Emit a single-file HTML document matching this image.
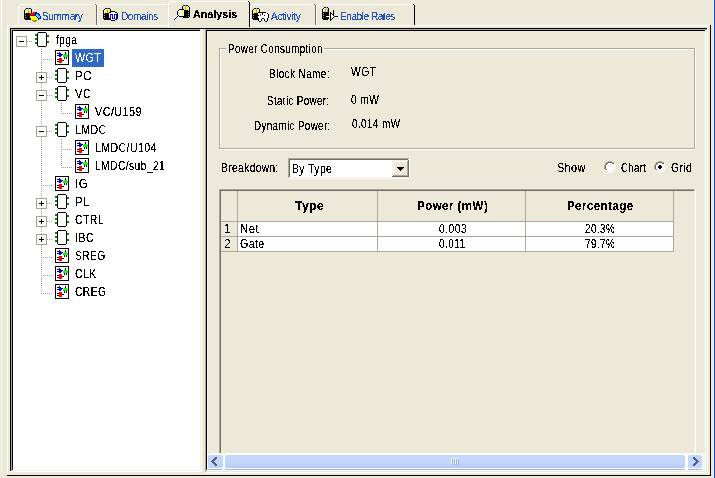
<!DOCTYPE html>
<html><head><meta charset="utf-8"><style>
html,body{margin:0;padding:0;}
body{width:715px;height:478px;background:#ECE9D8;position:relative;overflow:hidden;font-family:'Liberation Sans', sans-serif;}
body>div{position:absolute;}
.t{position:absolute;line-height:13px;white-space:nowrap;transform-origin:0 0;}
</style></head><body>
<svg width="0" height="0" style="position:absolute"><filter id="th" x="0" y="0" width="1" height="1" color-interpolation-filters="sRGB"><feComponentTransfer><feFuncA type="discrete" tableValues="0 0 0 0 1 1 1 1 1 1"/></feComponentTransfer></filter></svg>
<svg width="0" height="0" style="position:absolute"><filter id="th2" x="0" y="0" width="1" height="1" color-interpolation-filters="sRGB"><feComponentTransfer><feFuncA type="discrete" tableValues="0 0 0 0 0 1 1 1 1 1"/></feComponentTransfer></filter></svg>
<div style="left:1px;top:0px;width:1px;height:472px;background:#FFFFFF;"></div>
<div style="left:714px;top:0px;width:1px;height:478px;background:#0A46DC;"></div>
<div style="left:713px;top:0px;width:1px;height:478px;background:#F7F3E3;"></div>
<div style="left:20px;top:4px;width:75px;height:1px;background:#FFFFFF;"></div>
<div style="left:19px;top:5px;width:1px;height:1px;background:#FFFFFF;"></div>
<div style="left:18px;top:6px;width:1px;height:20px;background:#FFFFFF;"></div>
<div style="left:96px;top:5px;width:1px;height:20px;background:#716F64;"></div>
<div style="left:95px;top:4px;width:1px;height:1px;background:#716F64;"></div>
<div style="left:99px;top:4px;width:68px;height:1px;background:#FFFFFF;"></div>
<div style="left:98px;top:5px;width:1px;height:1px;background:#FFFFFF;"></div>
<div style="left:97px;top:6px;width:1px;height:20px;background:#FFFFFF;"></div>
<div style="left:252px;top:4px;width:62px;height:1px;background:#FFFFFF;"></div>
<div style="left:251px;top:5px;width:1px;height:1px;background:#FFFFFF;"></div>
<div style="left:250px;top:6px;width:1px;height:20px;background:#FFFFFF;"></div>
<div style="left:315px;top:5px;width:1px;height:20px;background:#716F64;"></div>
<div style="left:314px;top:4px;width:1px;height:1px;background:#716F64;"></div>
<div style="left:318px;top:4px;width:95px;height:1px;background:#FFFFFF;"></div>
<div style="left:317px;top:5px;width:1px;height:1px;background:#FFFFFF;"></div>
<div style="left:316px;top:6px;width:1px;height:20px;background:#FFFFFF;"></div>
<div style="left:414px;top:5px;width:1px;height:20px;background:#000000;"></div>
<div style="left:413px;top:4px;width:1px;height:1px;background:#000000;"></div>
<div style="left:7px;top:25px;width:703px;height:1px;background:#FFFFFF;"></div>
<div style="left:168px;top:1px;width:82px;height:26px;background:#ECE9D8;"></div>
<div style="left:170px;top:1px;width:78px;height:1px;background:#FFFFFF;"></div>
<div style="left:169px;top:2px;width:1px;height:1px;background:#FFFFFF;"></div>
<div style="left:168px;top:3px;width:1px;height:24px;background:#FFFFFF;"></div>
<div style="left:249px;top:2px;width:1px;height:25px;background:#000000;"></div>
<div style="left:248px;top:1px;width:1px;height:1px;background:#000000;"></div>
<div style="left:7px;top:25px;width:1px;height:450px;background:#FFFFFF;"></div>
<div style="left:710px;top:25px;width:1px;height:451px;background:#000000;"></div>
<div style="left:7px;top:475px;width:704px;height:1px;background:#000000;"></div>
<div style="left:10px;top:28px;width:697px;height:1px;background:#000000;"></div>
<div style="left:11px;top:29px;width:189px;height:1px;background:#ACA899;"></div>
<div style="left:200px;top:29px;width:5px;height:1px;background:#D8D5C6;"></div>
<div style="left:205px;top:29px;width:502px;height:1px;background:#ACA899;"></div>
<div style="left:10px;top:28px;width:1px;height:444px;background:#000000;"></div>
<div style="left:11px;top:29px;width:1px;height:442px;background:#ACA899;"></div>
<div style="left:12px;top:30px;width:1px;height:440px;background:#000000;"></div>
<div style="left:12px;top:30px;width:188px;height:1px;background:#000000;"></div>
<div style="left:13px;top:31px;width:187px;height:439px;background:#FFFFFF;"></div>
<div style="left:200px;top:30px;width:1px;height:441px;background:#F1EFE2;"></div>
<div style="left:201px;top:29px;width:1px;height:443px;background:#FFFFFF;"></div>
<div style="left:12px;top:470px;width:189px;height:1px;background:#F1EFE2;"></div>
<div style="left:10px;top:471px;width:192px;height:1px;background:#FFFFFF;"></div>
<div style="left:205px;top:29px;width:1px;height:444px;background:#ACA899;"></div>
<div style="left:206px;top:30px;width:1px;height:441px;background:#000000;"></div>
<div style="left:206px;top:30px;width:499px;height:1px;background:#000000;"></div>
<div style="left:207px;top:31px;width:1px;height:422px;background:#F6F4EA;"></div>
<div style="left:705px;top:30px;width:1px;height:441px;background:#FFFFFF;"></div>
<div style="left:707px;top:28px;width:1px;height:445px;background:#FFFFFF;"></div>
<div style="left:206px;top:470px;width:500px;height:1px;background:#FFFFFF;"></div>
<div style="left:205px;top:472px;width:503px;height:1px;background:#FFFFFF;"></div>
<div style="left:219px;top:48px;width:476px;height:1px;background:#ACA899;"></div>
<div style="left:220px;top:49px;width:474px;height:1px;background:#FFFFFF;"></div>
<div style="left:219px;top:48px;width:1px;height:101px;background:#ACA899;"></div>
<div style="left:220px;top:49px;width:1px;height:99px;background:#FFFFFF;"></div>
<div style="left:694px;top:48px;width:1px;height:101px;background:#ACA899;"></div>
<div style="left:695px;top:48px;width:1px;height:102px;background:#FFFFFF;"></div>
<div style="left:219px;top:148px;width:476px;height:1px;background:#ACA899;"></div>
<div style="left:219px;top:149px;width:477px;height:1px;background:#FFFFFF;"></div>
<div style="left:226px;top:42px;width:98px;height:12px;background:#ECE9D8;"></div>
<div style="left:288px;top:158px;width:121px;height:1px;background:#ACA899;"></div>
<div style="left:288px;top:158px;width:1px;height:20px;background:#ACA899;"></div>
<div style="left:289px;top:159px;width:119px;height:1px;background:#716F64;"></div>
<div style="left:289px;top:159px;width:1px;height:18px;background:#716F64;"></div>
<div style="left:288px;top:178px;width:122px;height:1px;background:#FFFFFF;"></div>
<div style="left:409px;top:158px;width:1px;height:21px;background:#FFFFFF;"></div>
<div style="left:289px;top:177px;width:120px;height:1px;background:#F1EFE2;"></div>
<div style="left:408px;top:159px;width:1px;height:19px;background:#F1EFE2;"></div>
<div style="left:290px;top:160px;width:118px;height:17px;background:#FFFFFF;"></div>
<div style="left:392px;top:160px;width:17px;height:17px;background:#ECE9D8;"></div>
<div style="left:392px;top:160px;width:16px;height:1px;background:#F1EFE2;"></div>
<div style="left:392px;top:160px;width:1px;height:16px;background:#F1EFE2;"></div>
<div style="left:393px;top:161px;width:14px;height:1px;background:#FFFFFF;"></div>
<div style="left:393px;top:161px;width:1px;height:14px;background:#FFFFFF;"></div>
<div style="left:392px;top:176px;width:17px;height:1px;background:#716F64;"></div>
<div style="left:408px;top:160px;width:1px;height:17px;background:#716F64;"></div>
<div style="left:393px;top:175px;width:15px;height:1px;background:#ACA899;"></div>
<div style="left:407px;top:161px;width:1px;height:15px;background:#ACA899;"></div>
<svg style="position:absolute;left:397px;top:167px" width="7" height="4" viewBox="0 0 7 4" shape-rendering="crispEdges"><rect x="0" y="0" width="7" height="1" fill="#000000"/><rect x="1" y="1" width="5" height="1" fill="#000000"/><rect x="2" y="2" width="3" height="1" fill="#000000"/><rect x="3" y="3" width="1" height="1" fill="#000000"/></svg>
<svg style="position:absolute;left:604px;top:161px" width="12" height="12" viewBox="0 0 12 12" shape-rendering="crispEdges"><rect x="4" y="0" width="4" height="1" fill="#ACA899"/><rect x="2" y="1" width="2" height="1" fill="#ACA899"/><rect x="4" y="1" width="4" height="1" fill="#716F64"/><rect x="8" y="1" width="2" height="1" fill="#ACA899"/><rect x="1" y="2" width="1" height="1" fill="#ACA899"/><rect x="2" y="2" width="2" height="1" fill="#716F64"/><rect x="4" y="2" width="4" height="1" fill="#FFFFFF"/><rect x="8" y="2" width="2" height="1" fill="#716F64"/><rect x="10" y="2" width="1" height="1" fill="#FFFFFF"/><rect x="1" y="3" width="1" height="1" fill="#ACA899"/><rect x="2" y="3" width="1" height="1" fill="#716F64"/><rect x="3" y="3" width="6" height="1" fill="#FFFFFF"/><rect x="9" y="3" width="1" height="1" fill="#F1EFE2"/><rect x="10" y="3" width="1" height="1" fill="#FFFFFF"/><rect x="0" y="4" width="1" height="1" fill="#ACA899"/><rect x="1" y="4" width="1" height="1" fill="#716F64"/><rect x="2" y="4" width="8" height="1" fill="#FFFFFF"/><rect x="10" y="4" width="1" height="1" fill="#F1EFE2"/><rect x="11" y="4" width="1" height="1" fill="#FFFFFF"/><rect x="0" y="5" width="1" height="1" fill="#ACA899"/><rect x="1" y="5" width="1" height="1" fill="#716F64"/><rect x="2" y="5" width="8" height="1" fill="#FFFFFF"/><rect x="10" y="5" width="1" height="1" fill="#F1EFE2"/><rect x="11" y="5" width="1" height="1" fill="#FFFFFF"/><rect x="0" y="6" width="1" height="1" fill="#ACA899"/><rect x="1" y="6" width="1" height="1" fill="#716F64"/><rect x="2" y="6" width="8" height="1" fill="#FFFFFF"/><rect x="10" y="6" width="1" height="1" fill="#F1EFE2"/><rect x="11" y="6" width="1" height="1" fill="#FFFFFF"/><rect x="0" y="7" width="1" height="1" fill="#ACA899"/><rect x="1" y="7" width="1" height="1" fill="#716F64"/><rect x="2" y="7" width="8" height="1" fill="#FFFFFF"/><rect x="10" y="7" width="1" height="1" fill="#F1EFE2"/><rect x="11" y="7" width="1" height="1" fill="#FFFFFF"/><rect x="1" y="8" width="1" height="1" fill="#ACA899"/><rect x="2" y="8" width="1" height="1" fill="#716F64"/><rect x="3" y="8" width="6" height="1" fill="#FFFFFF"/><rect x="9" y="8" width="1" height="1" fill="#F1EFE2"/><rect x="10" y="8" width="1" height="1" fill="#FFFFFF"/><rect x="1" y="9" width="1" height="1" fill="#FFFFFF"/><rect x="2" y="9" width="2" height="1" fill="#F1EFE2"/><rect x="4" y="9" width="4" height="1" fill="#FFFFFF"/><rect x="8" y="9" width="2" height="1" fill="#F1EFE2"/><rect x="10" y="9" width="1" height="1" fill="#FFFFFF"/><rect x="2" y="10" width="2" height="1" fill="#FFFFFF"/><rect x="4" y="10" width="4" height="1" fill="#F1EFE2"/><rect x="8" y="10" width="2" height="1" fill="#FFFFFF"/><rect x="4" y="11" width="4" height="1" fill="#FFFFFF"/></svg>
<svg style="position:absolute;left:654px;top:161px" width="12" height="12" viewBox="0 0 12 12" shape-rendering="crispEdges"><rect x="4" y="0" width="4" height="1" fill="#ACA899"/><rect x="2" y="1" width="2" height="1" fill="#ACA899"/><rect x="4" y="1" width="4" height="1" fill="#716F64"/><rect x="8" y="1" width="2" height="1" fill="#ACA899"/><rect x="1" y="2" width="1" height="1" fill="#ACA899"/><rect x="2" y="2" width="2" height="1" fill="#716F64"/><rect x="4" y="2" width="4" height="1" fill="#FFFFFF"/><rect x="8" y="2" width="2" height="1" fill="#716F64"/><rect x="10" y="2" width="1" height="1" fill="#FFFFFF"/><rect x="1" y="3" width="1" height="1" fill="#ACA899"/><rect x="2" y="3" width="1" height="1" fill="#716F64"/><rect x="3" y="3" width="6" height="1" fill="#FFFFFF"/><rect x="9" y="3" width="1" height="1" fill="#F1EFE2"/><rect x="10" y="3" width="1" height="1" fill="#FFFFFF"/><rect x="0" y="4" width="1" height="1" fill="#ACA899"/><rect x="1" y="4" width="1" height="1" fill="#716F64"/><rect x="2" y="4" width="3" height="1" fill="#FFFFFF"/><rect x="5" y="4" width="2" height="1" fill="#000000"/><rect x="7" y="4" width="3" height="1" fill="#FFFFFF"/><rect x="10" y="4" width="1" height="1" fill="#F1EFE2"/><rect x="11" y="4" width="1" height="1" fill="#FFFFFF"/><rect x="0" y="5" width="1" height="1" fill="#ACA899"/><rect x="1" y="5" width="1" height="1" fill="#716F64"/><rect x="2" y="5" width="2" height="1" fill="#FFFFFF"/><rect x="4" y="5" width="4" height="1" fill="#000000"/><rect x="8" y="5" width="2" height="1" fill="#FFFFFF"/><rect x="10" y="5" width="1" height="1" fill="#F1EFE2"/><rect x="11" y="5" width="1" height="1" fill="#FFFFFF"/><rect x="0" y="6" width="1" height="1" fill="#ACA899"/><rect x="1" y="6" width="1" height="1" fill="#716F64"/><rect x="2" y="6" width="2" height="1" fill="#FFFFFF"/><rect x="4" y="6" width="4" height="1" fill="#000000"/><rect x="8" y="6" width="2" height="1" fill="#FFFFFF"/><rect x="10" y="6" width="1" height="1" fill="#F1EFE2"/><rect x="11" y="6" width="1" height="1" fill="#FFFFFF"/><rect x="0" y="7" width="1" height="1" fill="#ACA899"/><rect x="1" y="7" width="1" height="1" fill="#716F64"/><rect x="2" y="7" width="3" height="1" fill="#FFFFFF"/><rect x="5" y="7" width="2" height="1" fill="#000000"/><rect x="7" y="7" width="3" height="1" fill="#FFFFFF"/><rect x="10" y="7" width="1" height="1" fill="#F1EFE2"/><rect x="11" y="7" width="1" height="1" fill="#FFFFFF"/><rect x="1" y="8" width="1" height="1" fill="#ACA899"/><rect x="2" y="8" width="1" height="1" fill="#716F64"/><rect x="3" y="8" width="6" height="1" fill="#FFFFFF"/><rect x="9" y="8" width="1" height="1" fill="#F1EFE2"/><rect x="10" y="8" width="1" height="1" fill="#FFFFFF"/><rect x="1" y="9" width="1" height="1" fill="#FFFFFF"/><rect x="2" y="9" width="2" height="1" fill="#F1EFE2"/><rect x="4" y="9" width="4" height="1" fill="#FFFFFF"/><rect x="8" y="9" width="2" height="1" fill="#F1EFE2"/><rect x="10" y="9" width="1" height="1" fill="#FFFFFF"/><rect x="2" y="10" width="2" height="1" fill="#FFFFFF"/><rect x="4" y="10" width="4" height="1" fill="#F1EFE2"/><rect x="8" y="10" width="2" height="1" fill="#FFFFFF"/><rect x="4" y="11" width="4" height="1" fill="#FFFFFF"/></svg>
<div style="left:219px;top:189px;width:476px;height:1px;background:#ACA899;"></div>
<div style="left:219px;top:189px;width:1px;height:264px;background:#ACA899;"></div>
<div style="left:220px;top:190px;width:474px;height:1px;background:#716F64;"></div>
<div style="left:220px;top:190px;width:1px;height:263px;background:#716F64;"></div>
<div style="left:694px;top:190px;width:1px;height:263px;background:#F1EFE2;"></div>
<div style="left:695px;top:189px;width:1px;height:264px;background:#FFFFFF;"></div>
<div style="left:221px;top:221px;width:453px;height:1px;background:#ACA899;"></div>
<div style="left:237px;top:191px;width:1px;height:61px;background:#ACA899;"></div>
<div style="left:377px;top:191px;width:1px;height:61px;background:#ACA899;"></div>
<div style="left:525px;top:191px;width:1px;height:61px;background:#ACA899;"></div>
<div style="left:673px;top:191px;width:1px;height:61px;background:#ACA899;"></div>
<div style="left:221px;top:236px;width:453px;height:1px;background:#ACA899;"></div>
<div style="left:221px;top:251px;width:453px;height:1px;background:#ACA899;"></div>
<div style="left:238px;top:222px;width:139px;height:14px;background:#FFFFFF;"></div>
<div style="left:378px;top:222px;width:147px;height:14px;background:#FFFFFF;"></div>
<div style="left:526px;top:222px;width:147px;height:14px;background:#FFFFFF;"></div>
<div style="left:238px;top:237px;width:139px;height:14px;background:#FFFFFF;"></div>
<div style="left:378px;top:237px;width:147px;height:14px;background:#FFFFFF;"></div>
<div style="left:526px;top:237px;width:147px;height:14px;background:#FFFFFF;"></div>
<div style="left:207px;top:453px;width:496px;height:17px;background:#FFFFFF;"></div>
<div style="left:703px;top:453px;width:2px;height:17px;background:#F3F2EC;"></div>
<div style="left:207px;top:453px;width:496px;height:1px;background:#F8F7F2;"></div>
<div style="left:208px;top:455px;width:15px;height:13px;border-radius:2px;background:linear-gradient(160deg,#C3D3FA 0%,#C6D7FC 50%,#B9D0FB 100%);"></div>
<div style="left:208px;top:469px;width:15px;height:1px;background:#9DB2DE;"></div>
<div style="left:225px;top:455px;width:460px;height:13px;border-radius:2px;background:linear-gradient(180deg,#BFD0F8 0%,#C8D8FC 10%,#C4D5FC 60%,#B6CCF9 92%,#AFC6F7 100%);"></div>
<div style="left:225px;top:469px;width:460px;height:1px;background:#9DB2DE;"></div>
<div style="left:688px;top:455px;width:14px;height:13px;border-radius:2px;background:linear-gradient(160deg,#C3D3FA 0%,#C6D7FC 50%,#B9D0FB 100%);"></div>
<div style="left:688px;top:469px;width:14px;height:1px;background:#9DB2DE;"></div>
<svg style="position:absolute;left:211px;top:457px" width="6" height="9" viewBox="0 0 6 9" shape-rendering="crispEdges"><rect x="4" y="0" width="2" height="1" fill="#4D6185"/><rect x="3" y="1" width="3" height="1" fill="#4D6185"/><rect x="2" y="2" width="3" height="1" fill="#4D6185"/><rect x="1" y="3" width="3" height="1" fill="#4D6185"/><rect x="0" y="4" width="3" height="1" fill="#4D6185"/><rect x="1" y="5" width="3" height="1" fill="#4D6185"/><rect x="2" y="6" width="3" height="1" fill="#4D6185"/><rect x="3" y="7" width="3" height="1" fill="#4D6185"/><rect x="4" y="8" width="2" height="1" fill="#4D6185"/></svg>
<svg style="position:absolute;left:693px;top:457px" width="6" height="9" viewBox="0 0 6 9" shape-rendering="crispEdges"><rect x="0" y="0" width="2" height="1" fill="#4D6185"/><rect x="0" y="1" width="3" height="1" fill="#4D6185"/><rect x="1" y="2" width="3" height="1" fill="#4D6185"/><rect x="2" y="3" width="3" height="1" fill="#4D6185"/><rect x="3" y="4" width="3" height="1" fill="#4D6185"/><rect x="2" y="5" width="3" height="1" fill="#4D6185"/><rect x="1" y="6" width="3" height="1" fill="#4D6185"/><rect x="0" y="7" width="3" height="1" fill="#4D6185"/><rect x="0" y="8" width="2" height="1" fill="#4D6185"/></svg>
<svg style="position:absolute;left:451px;top:458px" width="8" height="7" viewBox="0 0 8 7" shape-rendering="crispEdges"><rect x="0" y="0" width="1" height="6" fill="#F4F8FF"/><rect x="1" y="1" width="1" height="6" fill="#8CB0F5"/><rect x="2" y="0" width="1" height="6" fill="#F4F8FF"/><rect x="3" y="1" width="1" height="6" fill="#8CB0F5"/><rect x="4" y="0" width="1" height="6" fill="#F4F8FF"/><rect x="5" y="1" width="1" height="6" fill="#8CB0F5"/><rect x="6" y="0" width="1" height="6" fill="#F4F8FF"/><rect x="7" y="1" width="1" height="6" fill="#8CB0F5"/></svg>
<div style="left:41px;top:49px;width:1px;height:1px;background:#A3A193;"></div>
<div style="left:41px;top:51px;width:1px;height:1px;background:#A3A193;"></div>
<div style="left:41px;top:53px;width:1px;height:1px;background:#A3A193;"></div>
<div style="left:41px;top:55px;width:1px;height:1px;background:#A3A193;"></div>
<div style="left:41px;top:57px;width:1px;height:1px;background:#A3A193;"></div>
<div style="left:41px;top:59px;width:1px;height:1px;background:#A3A193;"></div>
<div style="left:41px;top:61px;width:1px;height:1px;background:#A3A193;"></div>
<div style="left:41px;top:63px;width:1px;height:1px;background:#A3A193;"></div>
<div style="left:41px;top:65px;width:1px;height:1px;background:#A3A193;"></div>
<div style="left:41px;top:67px;width:1px;height:1px;background:#A3A193;"></div>
<div style="left:41px;top:69px;width:1px;height:1px;background:#A3A193;"></div>
<div style="left:41px;top:71px;width:1px;height:1px;background:#A3A193;"></div>
<div style="left:41px;top:73px;width:1px;height:1px;background:#A3A193;"></div>
<div style="left:41px;top:75px;width:1px;height:1px;background:#A3A193;"></div>
<div style="left:41px;top:77px;width:1px;height:1px;background:#A3A193;"></div>
<div style="left:41px;top:79px;width:1px;height:1px;background:#A3A193;"></div>
<div style="left:41px;top:81px;width:1px;height:1px;background:#A3A193;"></div>
<div style="left:41px;top:83px;width:1px;height:1px;background:#A3A193;"></div>
<div style="left:41px;top:85px;width:1px;height:1px;background:#A3A193;"></div>
<div style="left:41px;top:87px;width:1px;height:1px;background:#A3A193;"></div>
<div style="left:41px;top:89px;width:1px;height:1px;background:#A3A193;"></div>
<div style="left:41px;top:91px;width:1px;height:1px;background:#A3A193;"></div>
<div style="left:41px;top:93px;width:1px;height:1px;background:#A3A193;"></div>
<div style="left:41px;top:95px;width:1px;height:1px;background:#A3A193;"></div>
<div style="left:41px;top:97px;width:1px;height:1px;background:#A3A193;"></div>
<div style="left:41px;top:99px;width:1px;height:1px;background:#A3A193;"></div>
<div style="left:41px;top:101px;width:1px;height:1px;background:#A3A193;"></div>
<div style="left:41px;top:103px;width:1px;height:1px;background:#A3A193;"></div>
<div style="left:41px;top:105px;width:1px;height:1px;background:#A3A193;"></div>
<div style="left:41px;top:107px;width:1px;height:1px;background:#A3A193;"></div>
<div style="left:41px;top:109px;width:1px;height:1px;background:#A3A193;"></div>
<div style="left:41px;top:111px;width:1px;height:1px;background:#A3A193;"></div>
<div style="left:41px;top:113px;width:1px;height:1px;background:#A3A193;"></div>
<div style="left:41px;top:115px;width:1px;height:1px;background:#A3A193;"></div>
<div style="left:41px;top:117px;width:1px;height:1px;background:#A3A193;"></div>
<div style="left:41px;top:119px;width:1px;height:1px;background:#A3A193;"></div>
<div style="left:41px;top:121px;width:1px;height:1px;background:#A3A193;"></div>
<div style="left:41px;top:123px;width:1px;height:1px;background:#A3A193;"></div>
<div style="left:41px;top:125px;width:1px;height:1px;background:#A3A193;"></div>
<div style="left:41px;top:127px;width:1px;height:1px;background:#A3A193;"></div>
<div style="left:41px;top:129px;width:1px;height:1px;background:#A3A193;"></div>
<div style="left:41px;top:131px;width:1px;height:1px;background:#A3A193;"></div>
<div style="left:41px;top:133px;width:1px;height:1px;background:#A3A193;"></div>
<div style="left:41px;top:135px;width:1px;height:1px;background:#A3A193;"></div>
<div style="left:41px;top:137px;width:1px;height:1px;background:#A3A193;"></div>
<div style="left:41px;top:139px;width:1px;height:1px;background:#A3A193;"></div>
<div style="left:41px;top:141px;width:1px;height:1px;background:#A3A193;"></div>
<div style="left:41px;top:143px;width:1px;height:1px;background:#A3A193;"></div>
<div style="left:41px;top:145px;width:1px;height:1px;background:#A3A193;"></div>
<div style="left:41px;top:147px;width:1px;height:1px;background:#A3A193;"></div>
<div style="left:41px;top:149px;width:1px;height:1px;background:#A3A193;"></div>
<div style="left:41px;top:151px;width:1px;height:1px;background:#A3A193;"></div>
<div style="left:41px;top:153px;width:1px;height:1px;background:#A3A193;"></div>
<div style="left:41px;top:155px;width:1px;height:1px;background:#A3A193;"></div>
<div style="left:41px;top:157px;width:1px;height:1px;background:#A3A193;"></div>
<div style="left:41px;top:159px;width:1px;height:1px;background:#A3A193;"></div>
<div style="left:41px;top:161px;width:1px;height:1px;background:#A3A193;"></div>
<div style="left:41px;top:163px;width:1px;height:1px;background:#A3A193;"></div>
<div style="left:41px;top:165px;width:1px;height:1px;background:#A3A193;"></div>
<div style="left:41px;top:167px;width:1px;height:1px;background:#A3A193;"></div>
<div style="left:41px;top:169px;width:1px;height:1px;background:#A3A193;"></div>
<div style="left:41px;top:171px;width:1px;height:1px;background:#A3A193;"></div>
<div style="left:41px;top:173px;width:1px;height:1px;background:#A3A193;"></div>
<div style="left:41px;top:175px;width:1px;height:1px;background:#A3A193;"></div>
<div style="left:41px;top:177px;width:1px;height:1px;background:#A3A193;"></div>
<div style="left:41px;top:179px;width:1px;height:1px;background:#A3A193;"></div>
<div style="left:41px;top:181px;width:1px;height:1px;background:#A3A193;"></div>
<div style="left:41px;top:183px;width:1px;height:1px;background:#A3A193;"></div>
<div style="left:41px;top:185px;width:1px;height:1px;background:#A3A193;"></div>
<div style="left:41px;top:187px;width:1px;height:1px;background:#A3A193;"></div>
<div style="left:41px;top:189px;width:1px;height:1px;background:#A3A193;"></div>
<div style="left:41px;top:191px;width:1px;height:1px;background:#A3A193;"></div>
<div style="left:41px;top:193px;width:1px;height:1px;background:#A3A193;"></div>
<div style="left:41px;top:195px;width:1px;height:1px;background:#A3A193;"></div>
<div style="left:41px;top:197px;width:1px;height:1px;background:#A3A193;"></div>
<div style="left:41px;top:199px;width:1px;height:1px;background:#A3A193;"></div>
<div style="left:41px;top:201px;width:1px;height:1px;background:#A3A193;"></div>
<div style="left:41px;top:203px;width:1px;height:1px;background:#A3A193;"></div>
<div style="left:41px;top:205px;width:1px;height:1px;background:#A3A193;"></div>
<div style="left:41px;top:207px;width:1px;height:1px;background:#A3A193;"></div>
<div style="left:41px;top:209px;width:1px;height:1px;background:#A3A193;"></div>
<div style="left:41px;top:211px;width:1px;height:1px;background:#A3A193;"></div>
<div style="left:41px;top:213px;width:1px;height:1px;background:#A3A193;"></div>
<div style="left:41px;top:215px;width:1px;height:1px;background:#A3A193;"></div>
<div style="left:41px;top:217px;width:1px;height:1px;background:#A3A193;"></div>
<div style="left:41px;top:219px;width:1px;height:1px;background:#A3A193;"></div>
<div style="left:41px;top:221px;width:1px;height:1px;background:#A3A193;"></div>
<div style="left:41px;top:223px;width:1px;height:1px;background:#A3A193;"></div>
<div style="left:41px;top:225px;width:1px;height:1px;background:#A3A193;"></div>
<div style="left:41px;top:227px;width:1px;height:1px;background:#A3A193;"></div>
<div style="left:41px;top:229px;width:1px;height:1px;background:#A3A193;"></div>
<div style="left:41px;top:231px;width:1px;height:1px;background:#A3A193;"></div>
<div style="left:41px;top:233px;width:1px;height:1px;background:#A3A193;"></div>
<div style="left:41px;top:235px;width:1px;height:1px;background:#A3A193;"></div>
<div style="left:41px;top:237px;width:1px;height:1px;background:#A3A193;"></div>
<div style="left:41px;top:239px;width:1px;height:1px;background:#A3A193;"></div>
<div style="left:41px;top:241px;width:1px;height:1px;background:#A3A193;"></div>
<div style="left:41px;top:243px;width:1px;height:1px;background:#A3A193;"></div>
<div style="left:41px;top:245px;width:1px;height:1px;background:#A3A193;"></div>
<div style="left:41px;top:247px;width:1px;height:1px;background:#A3A193;"></div>
<div style="left:41px;top:249px;width:1px;height:1px;background:#A3A193;"></div>
<div style="left:41px;top:251px;width:1px;height:1px;background:#A3A193;"></div>
<div style="left:41px;top:253px;width:1px;height:1px;background:#A3A193;"></div>
<div style="left:41px;top:255px;width:1px;height:1px;background:#A3A193;"></div>
<div style="left:41px;top:257px;width:1px;height:1px;background:#A3A193;"></div>
<div style="left:41px;top:259px;width:1px;height:1px;background:#A3A193;"></div>
<div style="left:41px;top:261px;width:1px;height:1px;background:#A3A193;"></div>
<div style="left:41px;top:263px;width:1px;height:1px;background:#A3A193;"></div>
<div style="left:41px;top:265px;width:1px;height:1px;background:#A3A193;"></div>
<div style="left:41px;top:267px;width:1px;height:1px;background:#A3A193;"></div>
<div style="left:41px;top:269px;width:1px;height:1px;background:#A3A193;"></div>
<div style="left:41px;top:271px;width:1px;height:1px;background:#A3A193;"></div>
<div style="left:41px;top:273px;width:1px;height:1px;background:#A3A193;"></div>
<div style="left:41px;top:275px;width:1px;height:1px;background:#A3A193;"></div>
<div style="left:41px;top:277px;width:1px;height:1px;background:#A3A193;"></div>
<div style="left:41px;top:279px;width:1px;height:1px;background:#A3A193;"></div>
<div style="left:41px;top:281px;width:1px;height:1px;background:#A3A193;"></div>
<div style="left:41px;top:283px;width:1px;height:1px;background:#A3A193;"></div>
<div style="left:41px;top:285px;width:1px;height:1px;background:#A3A193;"></div>
<div style="left:41px;top:287px;width:1px;height:1px;background:#A3A193;"></div>
<div style="left:41px;top:289px;width:1px;height:1px;background:#A3A193;"></div>
<div style="left:41px;top:291px;width:1px;height:1px;background:#A3A193;"></div>
<div style="left:41px;top:293px;width:1px;height:1px;background:#A3A193;"></div>
<div style="left:61px;top:103px;width:1px;height:1px;background:#A3A193;"></div>
<div style="left:61px;top:105px;width:1px;height:1px;background:#A3A193;"></div>
<div style="left:61px;top:107px;width:1px;height:1px;background:#A3A193;"></div>
<div style="left:61px;top:109px;width:1px;height:1px;background:#A3A193;"></div>
<div style="left:61px;top:111px;width:1px;height:1px;background:#A3A193;"></div>
<div style="left:61px;top:113px;width:1px;height:1px;background:#A3A193;"></div>
<div style="left:61px;top:139px;width:1px;height:1px;background:#A3A193;"></div>
<div style="left:61px;top:141px;width:1px;height:1px;background:#A3A193;"></div>
<div style="left:61px;top:143px;width:1px;height:1px;background:#A3A193;"></div>
<div style="left:61px;top:145px;width:1px;height:1px;background:#A3A193;"></div>
<div style="left:61px;top:147px;width:1px;height:1px;background:#A3A193;"></div>
<div style="left:61px;top:149px;width:1px;height:1px;background:#A3A193;"></div>
<div style="left:61px;top:151px;width:1px;height:1px;background:#A3A193;"></div>
<div style="left:61px;top:153px;width:1px;height:1px;background:#A3A193;"></div>
<div style="left:61px;top:155px;width:1px;height:1px;background:#A3A193;"></div>
<div style="left:61px;top:157px;width:1px;height:1px;background:#A3A193;"></div>
<div style="left:61px;top:159px;width:1px;height:1px;background:#A3A193;"></div>
<div style="left:61px;top:161px;width:1px;height:1px;background:#A3A193;"></div>
<div style="left:61px;top:163px;width:1px;height:1px;background:#A3A193;"></div>
<div style="left:61px;top:165px;width:1px;height:1px;background:#A3A193;"></div>
<div style="left:61px;top:167px;width:1px;height:1px;background:#A3A193;"></div>
<div style="left:27px;top:41px;width:1px;height:1px;background:#A3A193;"></div>
<div style="left:29px;top:41px;width:1px;height:1px;background:#A3A193;"></div>
<div style="left:31px;top:41px;width:1px;height:1px;background:#A3A193;"></div>
<svg style="position:absolute;left:16px;top:36px" width="11" height="11" viewBox="0 0 11 11" shape-rendering="crispEdges"><rect x="0" y="0" width="11" height="11" fill="#A8A493"/><rect x="1" y="1" width="9" height="9" fill="#FFFFFF"/><rect x="3" y="5" width="5" height="1" fill="#000000"/></svg>
<svg style="position:absolute;left:35px;top:32px" width="14" height="15" viewBox="0 0 14 15" shape-rendering="crispEdges"><rect x="3" y="0" width="8" height="1" fill="#000000"/><rect x="2" y="1" width="1" height="13" fill="#000000"/><rect x="11" y="1" width="1" height="13" fill="#000000"/><rect x="3" y="14" width="8" height="1" fill="#000000"/><rect x="3" y="1" width="8" height="13" fill="#FFFFFF"/><rect x="0" y="2" width="2" height="2" fill="#008A00"/><rect x="0" y="6" width="2" height="2" fill="#008A00"/><rect x="0" y="10" width="2" height="2" fill="#008A00"/><rect x="12" y="3" width="2" height="2" fill="#008A00"/><rect x="12" y="9" width="2" height="2" fill="#008A00"/></svg>
<div style="left:41px;top:59px;width:1px;height:1px;background:#A3A193;"></div>
<div style="left:43px;top:59px;width:1px;height:1px;background:#A3A193;"></div>
<div style="left:45px;top:59px;width:1px;height:1px;background:#A3A193;"></div>
<div style="left:47px;top:59px;width:1px;height:1px;background:#A3A193;"></div>
<div style="left:49px;top:59px;width:1px;height:1px;background:#A3A193;"></div>
<div style="left:51px;top:59px;width:1px;height:1px;background:#A3A193;"></div>
<svg style="position:absolute;left:55px;top:50px" width="14" height="15" viewBox="0 0 14 15" shape-rendering="crispEdges"><rect x="0" y="0" width="14" height="15" fill="#000000"/><rect x="1" y="1" width="12" height="13" fill="#FFFFFF"/><rect x="2" y="3" width="2" height="1" fill="#000000"/><rect x="2" y="5" width="2" height="1" fill="#000000"/><rect x="4" y="2" width="1" height="5" fill="#0000FF"/><rect x="5" y="3" width="1" height="4" fill="#0000FF"/><rect x="6" y="4" width="1" height="2" fill="#0000FF"/><rect x="7" y="4" width="1" height="1" fill="#000000"/><rect x="9" y="4" width="3" height="1" fill="#00FF00"/><rect x="8" y="5" width="5" height="2" fill="#00FF00"/><rect x="10" y="2" width="1" height="2" fill="#000000"/><rect x="9" y="7" width="1" height="2" fill="#000000"/><rect x="11" y="7" width="1" height="2" fill="#000000"/><rect x="4" y="8" width="3" height="5" fill="#FF0000"/><rect x="2" y="9" width="2" height="1" fill="#000000"/><rect x="2" y="11" width="2" height="1" fill="#000000"/><rect x="7" y="10" width="2" height="1" fill="#000000"/></svg>
<div style="left:72px;top:49px;width:32px;height:18px;background:#316AC5;"></div>
<div style="left:41px;top:77px;width:1px;height:1px;background:#A3A193;"></div>
<div style="left:43px;top:77px;width:1px;height:1px;background:#A3A193;"></div>
<div style="left:45px;top:77px;width:1px;height:1px;background:#A3A193;"></div>
<div style="left:47px;top:77px;width:1px;height:1px;background:#A3A193;"></div>
<div style="left:49px;top:77px;width:1px;height:1px;background:#A3A193;"></div>
<div style="left:51px;top:77px;width:1px;height:1px;background:#A3A193;"></div>
<svg style="position:absolute;left:36px;top:72px" width="11" height="11" viewBox="0 0 11 11" shape-rendering="crispEdges"><rect x="0" y="0" width="11" height="11" fill="#A8A493"/><rect x="1" y="1" width="9" height="9" fill="#FFFFFF"/><rect x="3" y="5" width="5" height="1" fill="#000000"/><rect x="5" y="3" width="1" height="5" fill="#000000"/></svg>
<svg style="position:absolute;left:55px;top:68px" width="14" height="15" viewBox="0 0 14 15" shape-rendering="crispEdges"><rect x="3" y="0" width="8" height="1" fill="#000000"/><rect x="2" y="1" width="1" height="13" fill="#000000"/><rect x="11" y="1" width="1" height="13" fill="#000000"/><rect x="3" y="14" width="8" height="1" fill="#000000"/><rect x="3" y="1" width="8" height="13" fill="#FFFFFF"/><rect x="0" y="2" width="2" height="2" fill="#008A00"/><rect x="0" y="6" width="2" height="2" fill="#008A00"/><rect x="0" y="10" width="2" height="2" fill="#008A00"/><rect x="12" y="3" width="2" height="2" fill="#008A00"/><rect x="12" y="9" width="2" height="2" fill="#008A00"/></svg>
<div style="left:41px;top:95px;width:1px;height:1px;background:#A3A193;"></div>
<div style="left:43px;top:95px;width:1px;height:1px;background:#A3A193;"></div>
<div style="left:45px;top:95px;width:1px;height:1px;background:#A3A193;"></div>
<div style="left:47px;top:95px;width:1px;height:1px;background:#A3A193;"></div>
<div style="left:49px;top:95px;width:1px;height:1px;background:#A3A193;"></div>
<div style="left:51px;top:95px;width:1px;height:1px;background:#A3A193;"></div>
<svg style="position:absolute;left:36px;top:90px" width="11" height="11" viewBox="0 0 11 11" shape-rendering="crispEdges"><rect x="0" y="0" width="11" height="11" fill="#A8A493"/><rect x="1" y="1" width="9" height="9" fill="#FFFFFF"/><rect x="3" y="5" width="5" height="1" fill="#000000"/></svg>
<svg style="position:absolute;left:55px;top:86px" width="14" height="15" viewBox="0 0 14 15" shape-rendering="crispEdges"><rect x="3" y="0" width="8" height="1" fill="#000000"/><rect x="2" y="1" width="1" height="13" fill="#000000"/><rect x="11" y="1" width="1" height="13" fill="#000000"/><rect x="3" y="14" width="8" height="1" fill="#000000"/><rect x="3" y="1" width="8" height="13" fill="#FFFFFF"/><rect x="0" y="2" width="2" height="2" fill="#008A00"/><rect x="0" y="6" width="2" height="2" fill="#008A00"/><rect x="0" y="10" width="2" height="2" fill="#008A00"/><rect x="12" y="3" width="2" height="2" fill="#008A00"/><rect x="12" y="9" width="2" height="2" fill="#008A00"/></svg>
<div style="left:61px;top:113px;width:1px;height:1px;background:#A3A193;"></div>
<div style="left:63px;top:113px;width:1px;height:1px;background:#A3A193;"></div>
<div style="left:65px;top:113px;width:1px;height:1px;background:#A3A193;"></div>
<div style="left:67px;top:113px;width:1px;height:1px;background:#A3A193;"></div>
<div style="left:69px;top:113px;width:1px;height:1px;background:#A3A193;"></div>
<div style="left:71px;top:113px;width:1px;height:1px;background:#A3A193;"></div>
<svg style="position:absolute;left:75px;top:104px" width="14" height="15" viewBox="0 0 14 15" shape-rendering="crispEdges"><rect x="0" y="0" width="14" height="15" fill="#000000"/><rect x="1" y="1" width="12" height="13" fill="#FFFFFF"/><rect x="2" y="3" width="2" height="1" fill="#000000"/><rect x="2" y="5" width="2" height="1" fill="#000000"/><rect x="4" y="2" width="1" height="5" fill="#0000FF"/><rect x="5" y="3" width="1" height="4" fill="#0000FF"/><rect x="6" y="4" width="1" height="2" fill="#0000FF"/><rect x="7" y="4" width="1" height="1" fill="#000000"/><rect x="9" y="4" width="3" height="1" fill="#00FF00"/><rect x="8" y="5" width="5" height="2" fill="#00FF00"/><rect x="10" y="2" width="1" height="2" fill="#000000"/><rect x="9" y="7" width="1" height="2" fill="#000000"/><rect x="11" y="7" width="1" height="2" fill="#000000"/><rect x="4" y="8" width="3" height="5" fill="#FF0000"/><rect x="2" y="9" width="2" height="1" fill="#000000"/><rect x="2" y="11" width="2" height="1" fill="#000000"/><rect x="7" y="10" width="2" height="1" fill="#000000"/></svg>
<div style="left:41px;top:131px;width:1px;height:1px;background:#A3A193;"></div>
<div style="left:43px;top:131px;width:1px;height:1px;background:#A3A193;"></div>
<div style="left:45px;top:131px;width:1px;height:1px;background:#A3A193;"></div>
<div style="left:47px;top:131px;width:1px;height:1px;background:#A3A193;"></div>
<div style="left:49px;top:131px;width:1px;height:1px;background:#A3A193;"></div>
<div style="left:51px;top:131px;width:1px;height:1px;background:#A3A193;"></div>
<svg style="position:absolute;left:36px;top:126px" width="11" height="11" viewBox="0 0 11 11" shape-rendering="crispEdges"><rect x="0" y="0" width="11" height="11" fill="#A8A493"/><rect x="1" y="1" width="9" height="9" fill="#FFFFFF"/><rect x="3" y="5" width="5" height="1" fill="#000000"/></svg>
<svg style="position:absolute;left:55px;top:122px" width="14" height="15" viewBox="0 0 14 15" shape-rendering="crispEdges"><rect x="3" y="0" width="8" height="1" fill="#000000"/><rect x="2" y="1" width="1" height="13" fill="#000000"/><rect x="11" y="1" width="1" height="13" fill="#000000"/><rect x="3" y="14" width="8" height="1" fill="#000000"/><rect x="3" y="1" width="8" height="13" fill="#FFFFFF"/><rect x="0" y="2" width="2" height="2" fill="#008A00"/><rect x="0" y="6" width="2" height="2" fill="#008A00"/><rect x="0" y="10" width="2" height="2" fill="#008A00"/><rect x="12" y="3" width="2" height="2" fill="#008A00"/><rect x="12" y="9" width="2" height="2" fill="#008A00"/></svg>
<div style="left:61px;top:149px;width:1px;height:1px;background:#A3A193;"></div>
<div style="left:63px;top:149px;width:1px;height:1px;background:#A3A193;"></div>
<div style="left:65px;top:149px;width:1px;height:1px;background:#A3A193;"></div>
<div style="left:67px;top:149px;width:1px;height:1px;background:#A3A193;"></div>
<div style="left:69px;top:149px;width:1px;height:1px;background:#A3A193;"></div>
<div style="left:71px;top:149px;width:1px;height:1px;background:#A3A193;"></div>
<svg style="position:absolute;left:75px;top:140px" width="14" height="15" viewBox="0 0 14 15" shape-rendering="crispEdges"><rect x="0" y="0" width="14" height="15" fill="#000000"/><rect x="1" y="1" width="12" height="13" fill="#FFFFFF"/><rect x="2" y="3" width="2" height="1" fill="#000000"/><rect x="2" y="5" width="2" height="1" fill="#000000"/><rect x="4" y="2" width="1" height="5" fill="#0000FF"/><rect x="5" y="3" width="1" height="4" fill="#0000FF"/><rect x="6" y="4" width="1" height="2" fill="#0000FF"/><rect x="7" y="4" width="1" height="1" fill="#000000"/><rect x="9" y="4" width="3" height="1" fill="#00FF00"/><rect x="8" y="5" width="5" height="2" fill="#00FF00"/><rect x="10" y="2" width="1" height="2" fill="#000000"/><rect x="9" y="7" width="1" height="2" fill="#000000"/><rect x="11" y="7" width="1" height="2" fill="#000000"/><rect x="4" y="8" width="3" height="5" fill="#FF0000"/><rect x="2" y="9" width="2" height="1" fill="#000000"/><rect x="2" y="11" width="2" height="1" fill="#000000"/><rect x="7" y="10" width="2" height="1" fill="#000000"/></svg>
<div style="left:61px;top:167px;width:1px;height:1px;background:#A3A193;"></div>
<div style="left:63px;top:167px;width:1px;height:1px;background:#A3A193;"></div>
<div style="left:65px;top:167px;width:1px;height:1px;background:#A3A193;"></div>
<div style="left:67px;top:167px;width:1px;height:1px;background:#A3A193;"></div>
<div style="left:69px;top:167px;width:1px;height:1px;background:#A3A193;"></div>
<div style="left:71px;top:167px;width:1px;height:1px;background:#A3A193;"></div>
<svg style="position:absolute;left:75px;top:158px" width="14" height="15" viewBox="0 0 14 15" shape-rendering="crispEdges"><rect x="0" y="0" width="14" height="15" fill="#000000"/><rect x="1" y="1" width="12" height="13" fill="#FFFFFF"/><rect x="2" y="3" width="2" height="1" fill="#000000"/><rect x="2" y="5" width="2" height="1" fill="#000000"/><rect x="4" y="2" width="1" height="5" fill="#0000FF"/><rect x="5" y="3" width="1" height="4" fill="#0000FF"/><rect x="6" y="4" width="1" height="2" fill="#0000FF"/><rect x="7" y="4" width="1" height="1" fill="#000000"/><rect x="9" y="4" width="3" height="1" fill="#00FF00"/><rect x="8" y="5" width="5" height="2" fill="#00FF00"/><rect x="10" y="2" width="1" height="2" fill="#000000"/><rect x="9" y="7" width="1" height="2" fill="#000000"/><rect x="11" y="7" width="1" height="2" fill="#000000"/><rect x="4" y="8" width="3" height="5" fill="#FF0000"/><rect x="2" y="9" width="2" height="1" fill="#000000"/><rect x="2" y="11" width="2" height="1" fill="#000000"/><rect x="7" y="10" width="2" height="1" fill="#000000"/></svg>
<div style="left:41px;top:185px;width:1px;height:1px;background:#A3A193;"></div>
<div style="left:43px;top:185px;width:1px;height:1px;background:#A3A193;"></div>
<div style="left:45px;top:185px;width:1px;height:1px;background:#A3A193;"></div>
<div style="left:47px;top:185px;width:1px;height:1px;background:#A3A193;"></div>
<div style="left:49px;top:185px;width:1px;height:1px;background:#A3A193;"></div>
<div style="left:51px;top:185px;width:1px;height:1px;background:#A3A193;"></div>
<svg style="position:absolute;left:55px;top:176px" width="14" height="15" viewBox="0 0 14 15" shape-rendering="crispEdges"><rect x="0" y="0" width="14" height="15" fill="#000000"/><rect x="1" y="1" width="12" height="13" fill="#FFFFFF"/><rect x="2" y="3" width="2" height="1" fill="#000000"/><rect x="2" y="5" width="2" height="1" fill="#000000"/><rect x="4" y="2" width="1" height="5" fill="#0000FF"/><rect x="5" y="3" width="1" height="4" fill="#0000FF"/><rect x="6" y="4" width="1" height="2" fill="#0000FF"/><rect x="7" y="4" width="1" height="1" fill="#000000"/><rect x="9" y="4" width="3" height="1" fill="#00FF00"/><rect x="8" y="5" width="5" height="2" fill="#00FF00"/><rect x="10" y="2" width="1" height="2" fill="#000000"/><rect x="9" y="7" width="1" height="2" fill="#000000"/><rect x="11" y="7" width="1" height="2" fill="#000000"/><rect x="4" y="8" width="3" height="5" fill="#FF0000"/><rect x="2" y="9" width="2" height="1" fill="#000000"/><rect x="2" y="11" width="2" height="1" fill="#000000"/><rect x="7" y="10" width="2" height="1" fill="#000000"/></svg>
<div style="left:41px;top:203px;width:1px;height:1px;background:#A3A193;"></div>
<div style="left:43px;top:203px;width:1px;height:1px;background:#A3A193;"></div>
<div style="left:45px;top:203px;width:1px;height:1px;background:#A3A193;"></div>
<div style="left:47px;top:203px;width:1px;height:1px;background:#A3A193;"></div>
<div style="left:49px;top:203px;width:1px;height:1px;background:#A3A193;"></div>
<div style="left:51px;top:203px;width:1px;height:1px;background:#A3A193;"></div>
<svg style="position:absolute;left:36px;top:198px" width="11" height="11" viewBox="0 0 11 11" shape-rendering="crispEdges"><rect x="0" y="0" width="11" height="11" fill="#A8A493"/><rect x="1" y="1" width="9" height="9" fill="#FFFFFF"/><rect x="3" y="5" width="5" height="1" fill="#000000"/><rect x="5" y="3" width="1" height="5" fill="#000000"/></svg>
<svg style="position:absolute;left:55px;top:194px" width="14" height="15" viewBox="0 0 14 15" shape-rendering="crispEdges"><rect x="3" y="0" width="8" height="1" fill="#000000"/><rect x="2" y="1" width="1" height="13" fill="#000000"/><rect x="11" y="1" width="1" height="13" fill="#000000"/><rect x="3" y="14" width="8" height="1" fill="#000000"/><rect x="3" y="1" width="8" height="13" fill="#FFFFFF"/><rect x="0" y="2" width="2" height="2" fill="#008A00"/><rect x="0" y="6" width="2" height="2" fill="#008A00"/><rect x="0" y="10" width="2" height="2" fill="#008A00"/><rect x="12" y="3" width="2" height="2" fill="#008A00"/><rect x="12" y="9" width="2" height="2" fill="#008A00"/></svg>
<div style="left:41px;top:221px;width:1px;height:1px;background:#A3A193;"></div>
<div style="left:43px;top:221px;width:1px;height:1px;background:#A3A193;"></div>
<div style="left:45px;top:221px;width:1px;height:1px;background:#A3A193;"></div>
<div style="left:47px;top:221px;width:1px;height:1px;background:#A3A193;"></div>
<div style="left:49px;top:221px;width:1px;height:1px;background:#A3A193;"></div>
<div style="left:51px;top:221px;width:1px;height:1px;background:#A3A193;"></div>
<svg style="position:absolute;left:36px;top:216px" width="11" height="11" viewBox="0 0 11 11" shape-rendering="crispEdges"><rect x="0" y="0" width="11" height="11" fill="#A8A493"/><rect x="1" y="1" width="9" height="9" fill="#FFFFFF"/><rect x="3" y="5" width="5" height="1" fill="#000000"/><rect x="5" y="3" width="1" height="5" fill="#000000"/></svg>
<svg style="position:absolute;left:55px;top:212px" width="14" height="15" viewBox="0 0 14 15" shape-rendering="crispEdges"><rect x="3" y="0" width="8" height="1" fill="#000000"/><rect x="2" y="1" width="1" height="13" fill="#000000"/><rect x="11" y="1" width="1" height="13" fill="#000000"/><rect x="3" y="14" width="8" height="1" fill="#000000"/><rect x="3" y="1" width="8" height="13" fill="#FFFFFF"/><rect x="0" y="2" width="2" height="2" fill="#008A00"/><rect x="0" y="6" width="2" height="2" fill="#008A00"/><rect x="0" y="10" width="2" height="2" fill="#008A00"/><rect x="12" y="3" width="2" height="2" fill="#008A00"/><rect x="12" y="9" width="2" height="2" fill="#008A00"/></svg>
<div style="left:41px;top:239px;width:1px;height:1px;background:#A3A193;"></div>
<div style="left:43px;top:239px;width:1px;height:1px;background:#A3A193;"></div>
<div style="left:45px;top:239px;width:1px;height:1px;background:#A3A193;"></div>
<div style="left:47px;top:239px;width:1px;height:1px;background:#A3A193;"></div>
<div style="left:49px;top:239px;width:1px;height:1px;background:#A3A193;"></div>
<div style="left:51px;top:239px;width:1px;height:1px;background:#A3A193;"></div>
<svg style="position:absolute;left:36px;top:234px" width="11" height="11" viewBox="0 0 11 11" shape-rendering="crispEdges"><rect x="0" y="0" width="11" height="11" fill="#A8A493"/><rect x="1" y="1" width="9" height="9" fill="#FFFFFF"/><rect x="3" y="5" width="5" height="1" fill="#000000"/><rect x="5" y="3" width="1" height="5" fill="#000000"/></svg>
<svg style="position:absolute;left:55px;top:230px" width="14" height="15" viewBox="0 0 14 15" shape-rendering="crispEdges"><rect x="3" y="0" width="8" height="1" fill="#000000"/><rect x="2" y="1" width="1" height="13" fill="#000000"/><rect x="11" y="1" width="1" height="13" fill="#000000"/><rect x="3" y="14" width="8" height="1" fill="#000000"/><rect x="3" y="1" width="8" height="13" fill="#FFFFFF"/><rect x="0" y="2" width="2" height="2" fill="#008A00"/><rect x="0" y="6" width="2" height="2" fill="#008A00"/><rect x="0" y="10" width="2" height="2" fill="#008A00"/><rect x="12" y="3" width="2" height="2" fill="#008A00"/><rect x="12" y="9" width="2" height="2" fill="#008A00"/></svg>
<div style="left:41px;top:257px;width:1px;height:1px;background:#A3A193;"></div>
<div style="left:43px;top:257px;width:1px;height:1px;background:#A3A193;"></div>
<div style="left:45px;top:257px;width:1px;height:1px;background:#A3A193;"></div>
<div style="left:47px;top:257px;width:1px;height:1px;background:#A3A193;"></div>
<div style="left:49px;top:257px;width:1px;height:1px;background:#A3A193;"></div>
<div style="left:51px;top:257px;width:1px;height:1px;background:#A3A193;"></div>
<svg style="position:absolute;left:55px;top:248px" width="14" height="15" viewBox="0 0 14 15" shape-rendering="crispEdges"><rect x="0" y="0" width="14" height="15" fill="#000000"/><rect x="1" y="1" width="12" height="13" fill="#FFFFFF"/><rect x="2" y="3" width="2" height="1" fill="#000000"/><rect x="2" y="5" width="2" height="1" fill="#000000"/><rect x="4" y="2" width="1" height="5" fill="#0000FF"/><rect x="5" y="3" width="1" height="4" fill="#0000FF"/><rect x="6" y="4" width="1" height="2" fill="#0000FF"/><rect x="7" y="4" width="1" height="1" fill="#000000"/><rect x="9" y="4" width="3" height="1" fill="#00FF00"/><rect x="8" y="5" width="5" height="2" fill="#00FF00"/><rect x="10" y="2" width="1" height="2" fill="#000000"/><rect x="9" y="7" width="1" height="2" fill="#000000"/><rect x="11" y="7" width="1" height="2" fill="#000000"/><rect x="4" y="8" width="3" height="5" fill="#FF0000"/><rect x="2" y="9" width="2" height="1" fill="#000000"/><rect x="2" y="11" width="2" height="1" fill="#000000"/><rect x="7" y="10" width="2" height="1" fill="#000000"/></svg>
<div style="left:41px;top:275px;width:1px;height:1px;background:#A3A193;"></div>
<div style="left:43px;top:275px;width:1px;height:1px;background:#A3A193;"></div>
<div style="left:45px;top:275px;width:1px;height:1px;background:#A3A193;"></div>
<div style="left:47px;top:275px;width:1px;height:1px;background:#A3A193;"></div>
<div style="left:49px;top:275px;width:1px;height:1px;background:#A3A193;"></div>
<div style="left:51px;top:275px;width:1px;height:1px;background:#A3A193;"></div>
<svg style="position:absolute;left:55px;top:266px" width="14" height="15" viewBox="0 0 14 15" shape-rendering="crispEdges"><rect x="0" y="0" width="14" height="15" fill="#000000"/><rect x="1" y="1" width="12" height="13" fill="#FFFFFF"/><rect x="2" y="3" width="2" height="1" fill="#000000"/><rect x="2" y="5" width="2" height="1" fill="#000000"/><rect x="4" y="2" width="1" height="5" fill="#0000FF"/><rect x="5" y="3" width="1" height="4" fill="#0000FF"/><rect x="6" y="4" width="1" height="2" fill="#0000FF"/><rect x="7" y="4" width="1" height="1" fill="#000000"/><rect x="9" y="4" width="3" height="1" fill="#00FF00"/><rect x="8" y="5" width="5" height="2" fill="#00FF00"/><rect x="10" y="2" width="1" height="2" fill="#000000"/><rect x="9" y="7" width="1" height="2" fill="#000000"/><rect x="11" y="7" width="1" height="2" fill="#000000"/><rect x="4" y="8" width="3" height="5" fill="#FF0000"/><rect x="2" y="9" width="2" height="1" fill="#000000"/><rect x="2" y="11" width="2" height="1" fill="#000000"/><rect x="7" y="10" width="2" height="1" fill="#000000"/></svg>
<div style="left:41px;top:293px;width:1px;height:1px;background:#A3A193;"></div>
<div style="left:43px;top:293px;width:1px;height:1px;background:#A3A193;"></div>
<div style="left:45px;top:293px;width:1px;height:1px;background:#A3A193;"></div>
<div style="left:47px;top:293px;width:1px;height:1px;background:#A3A193;"></div>
<div style="left:49px;top:293px;width:1px;height:1px;background:#A3A193;"></div>
<div style="left:51px;top:293px;width:1px;height:1px;background:#A3A193;"></div>
<svg style="position:absolute;left:55px;top:284px" width="14" height="15" viewBox="0 0 14 15" shape-rendering="crispEdges"><rect x="0" y="0" width="14" height="15" fill="#000000"/><rect x="1" y="1" width="12" height="13" fill="#FFFFFF"/><rect x="2" y="3" width="2" height="1" fill="#000000"/><rect x="2" y="5" width="2" height="1" fill="#000000"/><rect x="4" y="2" width="1" height="5" fill="#0000FF"/><rect x="5" y="3" width="1" height="4" fill="#0000FF"/><rect x="6" y="4" width="1" height="2" fill="#0000FF"/><rect x="7" y="4" width="1" height="1" fill="#000000"/><rect x="9" y="4" width="3" height="1" fill="#00FF00"/><rect x="8" y="5" width="5" height="2" fill="#00FF00"/><rect x="10" y="2" width="1" height="2" fill="#000000"/><rect x="9" y="7" width="1" height="2" fill="#000000"/><rect x="11" y="7" width="1" height="2" fill="#000000"/><rect x="4" y="8" width="3" height="5" fill="#FF0000"/><rect x="2" y="9" width="2" height="1" fill="#000000"/><rect x="2" y="11" width="2" height="1" fill="#000000"/><rect x="7" y="10" width="2" height="1" fill="#000000"/></svg>
<svg style="position:absolute;left:24px;top:7px" width="17" height="15" viewBox="0 0 17 15" shape-rendering="crispEdges"><rect x="2" y="1" width="2" height="1" fill="#000000"/><rect x="4" y="1" width="1" height="1" fill="#A0A0A0"/><rect x="5" y="1" width="2" height="1" fill="#000000"/><rect x="1" y="2" width="1" height="1" fill="#000000"/><rect x="2" y="2" width="2" height="1" fill="#FFFFFF"/><rect x="4" y="2" width="1" height="1" fill="#A0A0A0"/><rect x="5" y="2" width="2" height="1" fill="#FFFFFF"/><rect x="7" y="2" width="1" height="1" fill="#000000"/><rect x="0" y="3" width="1" height="1" fill="#000000"/><rect x="1" y="3" width="1" height="1" fill="#FFFFFF"/><rect x="2" y="3" width="2" height="1" fill="#FFFF00"/><rect x="4" y="3" width="1" height="1" fill="#A0A0A0"/><rect x="5" y="3" width="2" height="1" fill="#FFFF00"/><rect x="7" y="3" width="1" height="1" fill="#000000"/><rect x="0" y="4" width="1" height="1" fill="#000000"/><rect x="1" y="4" width="1" height="1" fill="#FFFFFF"/><rect x="2" y="4" width="2" height="1" fill="#FFFF00"/><rect x="4" y="4" width="1" height="1" fill="#A0A0A0"/><rect x="5" y="4" width="2" height="1" fill="#FFFF00"/><rect x="7" y="4" width="1" height="1" fill="#000000"/><rect x="0" y="5" width="1" height="1" fill="#000000"/><rect x="1" y="5" width="1" height="1" fill="#FFFFFF"/><rect x="2" y="5" width="2" height="1" fill="#FFFF00"/><rect x="4" y="5" width="1" height="1" fill="#A0A0A0"/><rect x="5" y="5" width="2" height="1" fill="#FFFF00"/><rect x="7" y="5" width="1" height="1" fill="#000000"/><rect x="9" y="5" width="2" height="1" fill="#FF0000"/><rect x="11" y="5" width="2" height="1" fill="#0000FF"/><rect x="0" y="6" width="1" height="1" fill="#000000"/><rect x="1" y="6" width="1" height="1" fill="#A0A0A0"/><rect x="2" y="6" width="4" height="1" fill="#000000"/><rect x="6" y="6" width="5" height="1" fill="#FF0000"/><rect x="11" y="6" width="4" height="1" fill="#0000FF"/><rect x="0" y="7" width="6" height="1" fill="#000000"/><rect x="6" y="7" width="5" height="1" fill="#FF0000"/><rect x="11" y="7" width="1" height="1" fill="#0000FF"/><rect x="12" y="7" width="2" height="1" fill="#00FFFF"/><rect x="14" y="7" width="2" height="1" fill="#0000FF"/><rect x="0" y="8" width="1" height="1" fill="#000000"/><rect x="1" y="8" width="1" height="1" fill="#A0A0A0"/><rect x="2" y="8" width="4" height="1" fill="#000000"/><rect x="6" y="8" width="5" height="1" fill="#A00000"/><rect x="11" y="8" width="1" height="1" fill="#0000FF"/><rect x="12" y="8" width="3" height="1" fill="#00FFFF"/><rect x="15" y="8" width="1" height="1" fill="#0000FF"/><rect x="0" y="9" width="6" height="1" fill="#000000"/><rect x="6" y="9" width="6" height="1" fill="#FFFF00"/><rect x="12" y="9" width="1" height="1" fill="#0000FF"/><rect x="13" y="9" width="3" height="1" fill="#00FFFF"/><rect x="16" y="9" width="1" height="1" fill="#0000FF"/><rect x="0" y="10" width="1" height="1" fill="#000000"/><rect x="1" y="10" width="1" height="1" fill="#A0A0A0"/><rect x="2" y="10" width="4" height="1" fill="#000000"/><rect x="6" y="10" width="7" height="1" fill="#FFFF00"/><rect x="13" y="10" width="1" height="1" fill="#0000FF"/><rect x="14" y="10" width="2" height="1" fill="#00FFFF"/><rect x="16" y="10" width="1" height="1" fill="#0000FF"/><rect x="0" y="11" width="7" height="1" fill="#000000"/><rect x="7" y="11" width="7" height="1" fill="#FFFF00"/><rect x="14" y="11" width="3" height="1" fill="#0000FF"/><rect x="1" y="12" width="6" height="1" fill="#000000"/><rect x="7" y="12" width="7" height="1" fill="#FFFF00"/><rect x="14" y="12" width="1" height="1" fill="#0000FF"/><rect x="8" y="13" width="5" height="1" fill="#A09000"/><rect x="9" y="14" width="3" height="1" fill="#A09000"/></svg>
<svg style="position:absolute;left:103px;top:7px" width="16" height="15" viewBox="0 0 16 15" shape-rendering="crispEdges"><rect x="2" y="1" width="2" height="1" fill="#000000"/><rect x="4" y="1" width="1" height="1" fill="#A0A0A0"/><rect x="5" y="1" width="2" height="1" fill="#000000"/><rect x="1" y="2" width="1" height="1" fill="#000000"/><rect x="2" y="2" width="2" height="1" fill="#FFFFFF"/><rect x="4" y="2" width="1" height="1" fill="#A0A0A0"/><rect x="5" y="2" width="2" height="1" fill="#FFFFFF"/><rect x="7" y="2" width="1" height="1" fill="#000000"/><rect x="0" y="3" width="1" height="1" fill="#000000"/><rect x="1" y="3" width="1" height="1" fill="#FFFFFF"/><rect x="2" y="3" width="2" height="1" fill="#FFFF00"/><rect x="4" y="3" width="1" height="1" fill="#A0A0A0"/><rect x="5" y="3" width="2" height="1" fill="#FFFF00"/><rect x="7" y="3" width="1" height="1" fill="#000000"/><rect x="0" y="4" width="1" height="1" fill="#000000"/><rect x="1" y="4" width="1" height="1" fill="#FFFFFF"/><rect x="2" y="4" width="2" height="1" fill="#FFFF00"/><rect x="4" y="4" width="1" height="1" fill="#A0A0A0"/><rect x="5" y="4" width="2" height="1" fill="#FFFF00"/><rect x="7" y="4" width="5" height="1" fill="#000000"/><rect x="0" y="5" width="1" height="1" fill="#000000"/><rect x="1" y="5" width="1" height="1" fill="#FFFFFF"/><rect x="2" y="5" width="2" height="1" fill="#FFFF00"/><rect x="4" y="5" width="1" height="1" fill="#A0A0A0"/><rect x="5" y="5" width="1" height="1" fill="#FFFF00"/><rect x="6" y="5" width="2" height="1" fill="#000000"/><rect x="8" y="5" width="4" height="1" fill="#FFFFFF"/><rect x="12" y="5" width="2" height="1" fill="#000000"/><rect x="0" y="6" width="1" height="1" fill="#000000"/><rect x="1" y="6" width="1" height="1" fill="#A0A0A0"/><rect x="2" y="6" width="4" height="1" fill="#000000"/><rect x="6" y="6" width="8" height="1" fill="#FFFFFF"/><rect x="14" y="6" width="1" height="1" fill="#000000"/><rect x="0" y="7" width="6" height="1" fill="#000000"/><rect x="6" y="7" width="1" height="1" fill="#FFFFFF"/><rect x="7" y="7" width="3" height="1" fill="#0000FF"/><rect x="10" y="7" width="1" height="1" fill="#FFFFFF"/><rect x="11" y="7" width="3" height="1" fill="#0000FF"/><rect x="14" y="7" width="1" height="1" fill="#000000"/><rect x="0" y="8" width="1" height="1" fill="#000000"/><rect x="1" y="8" width="1" height="1" fill="#A0A0A0"/><rect x="2" y="8" width="4" height="1" fill="#000000"/><rect x="6" y="8" width="1" height="1" fill="#FFFFFF"/><rect x="7" y="8" width="1" height="1" fill="#0000FF"/><rect x="8" y="8" width="1" height="1" fill="#FFFFFF"/><rect x="9" y="8" width="1" height="1" fill="#0000FF"/><rect x="10" y="8" width="1" height="1" fill="#FFFFFF"/><rect x="11" y="8" width="1" height="1" fill="#0000FF"/><rect x="12" y="8" width="1" height="1" fill="#FFFFFF"/><rect x="13" y="8" width="1" height="1" fill="#0000FF"/><rect x="14" y="8" width="1" height="1" fill="#000000"/><rect x="0" y="9" width="6" height="1" fill="#000000"/><rect x="6" y="9" width="1" height="1" fill="#FFFFFF"/><rect x="7" y="9" width="1" height="1" fill="#0000FF"/><rect x="8" y="9" width="1" height="1" fill="#FFFFFF"/><rect x="9" y="9" width="1" height="1" fill="#0000FF"/><rect x="10" y="9" width="1" height="1" fill="#FFFFFF"/><rect x="11" y="9" width="1" height="1" fill="#0000FF"/><rect x="12" y="9" width="1" height="1" fill="#FFFFFF"/><rect x="13" y="9" width="1" height="1" fill="#0000FF"/><rect x="14" y="9" width="1" height="1" fill="#000000"/><rect x="0" y="10" width="1" height="1" fill="#000000"/><rect x="1" y="10" width="1" height="1" fill="#A0A0A0"/><rect x="2" y="10" width="4" height="1" fill="#000000"/><rect x="6" y="10" width="1" height="1" fill="#FFFFFF"/><rect x="7" y="10" width="1" height="1" fill="#0000FF"/><rect x="8" y="10" width="1" height="1" fill="#FFFFFF"/><rect x="9" y="10" width="1" height="1" fill="#0000FF"/><rect x="10" y="10" width="1" height="1" fill="#FFFFFF"/><rect x="11" y="10" width="1" height="1" fill="#0000FF"/><rect x="12" y="10" width="1" height="1" fill="#FFFFFF"/><rect x="13" y="10" width="1" height="1" fill="#0000FF"/><rect x="14" y="10" width="1" height="1" fill="#000000"/><rect x="0" y="11" width="6" height="1" fill="#000000"/><rect x="6" y="11" width="2" height="1" fill="#0000FF"/><rect x="8" y="11" width="1" height="1" fill="#FFFFFF"/><rect x="9" y="11" width="3" height="1" fill="#0000FF"/><rect x="12" y="11" width="1" height="1" fill="#FFFFFF"/><rect x="13" y="11" width="2" height="1" fill="#0000FF"/><rect x="1" y="12" width="7" height="1" fill="#000000"/><rect x="8" y="12" width="4" height="1" fill="#FFFFFF"/><rect x="12" y="12" width="2" height="1" fill="#000000"/><rect x="8" y="13" width="4" height="1" fill="#000000"/></svg>
<svg style="position:absolute;left:174px;top:5px" width="16" height="15" viewBox="0 0 16 15" shape-rendering="crispEdges"><rect x="9" y="0" width="2" height="1" fill="#000000"/><rect x="11" y="0" width="1" height="1" fill="#A0A0A0"/><rect x="12" y="0" width="2" height="1" fill="#000000"/><rect x="8" y="1" width="1" height="1" fill="#000000"/><rect x="9" y="1" width="2" height="1" fill="#FFFFFF"/><rect x="11" y="1" width="1" height="1" fill="#A0A0A0"/><rect x="12" y="1" width="2" height="1" fill="#FFFFFF"/><rect x="14" y="1" width="1" height="1" fill="#000000"/><rect x="8" y="2" width="1" height="1" fill="#000000"/><rect x="9" y="2" width="2" height="1" fill="#FFFF00"/><rect x="11" y="2" width="1" height="1" fill="#A0A0A0"/><rect x="12" y="2" width="2" height="1" fill="#FFFF00"/><rect x="14" y="2" width="1" height="1" fill="#FFFFFF"/><rect x="15" y="2" width="1" height="1" fill="#000000"/><rect x="8" y="3" width="1" height="1" fill="#000000"/><rect x="9" y="3" width="2" height="1" fill="#FFFF00"/><rect x="11" y="3" width="1" height="1" fill="#A0A0A0"/><rect x="12" y="3" width="2" height="1" fill="#FFFF00"/><rect x="14" y="3" width="1" height="1" fill="#FFFFFF"/><rect x="15" y="3" width="1" height="1" fill="#000000"/><rect x="5" y="4" width="5" height="1" fill="#000000"/><rect x="10" y="4" width="1" height="1" fill="#FFFF00"/><rect x="11" y="4" width="1" height="1" fill="#A0A0A0"/><rect x="12" y="4" width="2" height="1" fill="#FFFF00"/><rect x="14" y="4" width="1" height="1" fill="#FFFFFF"/><rect x="15" y="4" width="1" height="1" fill="#000000"/><rect x="4" y="5" width="1" height="1" fill="#000000"/><rect x="5" y="5" width="3" height="1" fill="#FFFFFF"/><rect x="8" y="5" width="1" height="1" fill="#FFFF00"/><rect x="9" y="5" width="1" height="1" fill="#FFFFFF"/><rect x="10" y="5" width="4" height="1" fill="#000000"/><rect x="14" y="5" width="1" height="1" fill="#A0A0A0"/><rect x="15" y="5" width="1" height="1" fill="#000000"/><rect x="3" y="6" width="1" height="1" fill="#000000"/><rect x="4" y="6" width="4" height="1" fill="#FFFFFF"/><rect x="8" y="6" width="1" height="1" fill="#FFFF00"/><rect x="9" y="6" width="1" height="1" fill="#FFFFFF"/><rect x="10" y="6" width="6" height="1" fill="#000000"/><rect x="3" y="7" width="1" height="1" fill="#000000"/><rect x="4" y="7" width="1" height="1" fill="#FFFFFF"/><rect x="5" y="7" width="1" height="1" fill="#D8D8D8"/><rect x="6" y="7" width="2" height="1" fill="#FFFFFF"/><rect x="8" y="7" width="1" height="1" fill="#FFFF00"/><rect x="9" y="7" width="1" height="1" fill="#FFFFFF"/><rect x="10" y="7" width="4" height="1" fill="#000000"/><rect x="14" y="7" width="1" height="1" fill="#A0A0A0"/><rect x="15" y="7" width="1" height="1" fill="#000000"/><rect x="3" y="8" width="1" height="1" fill="#000000"/><rect x="4" y="8" width="1" height="1" fill="#FFFFFF"/><rect x="5" y="8" width="1" height="1" fill="#D8D8D8"/><rect x="6" y="8" width="2" height="1" fill="#FFFFFF"/><rect x="8" y="8" width="1" height="1" fill="#FFFF00"/><rect x="9" y="8" width="1" height="1" fill="#FFFFFF"/><rect x="10" y="8" width="6" height="1" fill="#000000"/><rect x="3" y="9" width="1" height="1" fill="#000000"/><rect x="4" y="9" width="4" height="1" fill="#FFFFFF"/><rect x="8" y="9" width="1" height="1" fill="#FFFF00"/><rect x="9" y="9" width="1" height="1" fill="#FFFFFF"/><rect x="10" y="9" width="4" height="1" fill="#000000"/><rect x="14" y="9" width="1" height="1" fill="#A0A0A0"/><rect x="15" y="9" width="1" height="1" fill="#000000"/><rect x="4" y="10" width="1" height="1" fill="#000000"/><rect x="5" y="10" width="3" height="1" fill="#FFFFFF"/><rect x="8" y="10" width="1" height="1" fill="#FFFF00"/><rect x="9" y="10" width="1" height="1" fill="#FFFFFF"/><rect x="10" y="10" width="6" height="1" fill="#000000"/><rect x="2" y="11" width="1" height="1" fill="#FFFFFF"/><rect x="3" y="11" width="1" height="1" fill="#1020A0"/><rect x="5" y="11" width="9" height="1" fill="#000000"/><rect x="14" y="11" width="1" height="1" fill="#A0A0A0"/><rect x="15" y="11" width="1" height="1" fill="#000000"/><rect x="1" y="12" width="1" height="1" fill="#FFFFFF"/><rect x="2" y="12" width="1" height="1" fill="#1020A0"/><rect x="9" y="12" width="6" height="1" fill="#000000"/><rect x="0" y="13" width="1" height="1" fill="#FFFFFF"/><rect x="1" y="13" width="1" height="1" fill="#1020A0"/><rect x="0" y="14" width="1" height="1" fill="#1020A0"/></svg>
<svg style="position:absolute;left:252px;top:7px" width="17" height="15" viewBox="0 0 17 15" shape-rendering="crispEdges"><rect x="2" y="1" width="2" height="1" fill="#000000"/><rect x="4" y="1" width="1" height="1" fill="#A0A0A0"/><rect x="5" y="1" width="2" height="1" fill="#000000"/><rect x="1" y="2" width="1" height="1" fill="#000000"/><rect x="2" y="2" width="2" height="1" fill="#FFFFFF"/><rect x="4" y="2" width="1" height="1" fill="#A0A0A0"/><rect x="5" y="2" width="2" height="1" fill="#FFFFFF"/><rect x="7" y="2" width="1" height="1" fill="#000000"/><rect x="0" y="3" width="1" height="1" fill="#000000"/><rect x="1" y="3" width="1" height="1" fill="#FFFFFF"/><rect x="2" y="3" width="2" height="1" fill="#FFFF00"/><rect x="4" y="3" width="1" height="1" fill="#A0A0A0"/><rect x="5" y="3" width="2" height="1" fill="#FFFF00"/><rect x="7" y="3" width="1" height="1" fill="#000000"/><rect x="0" y="4" width="1" height="1" fill="#000000"/><rect x="1" y="4" width="1" height="1" fill="#FFFFFF"/><rect x="2" y="4" width="2" height="1" fill="#FFFF00"/><rect x="4" y="4" width="1" height="1" fill="#A0A0A0"/><rect x="5" y="4" width="2" height="1" fill="#FFFF00"/><rect x="7" y="4" width="1" height="1" fill="#000000"/><rect x="0" y="5" width="1" height="1" fill="#000000"/><rect x="1" y="5" width="1" height="1" fill="#FFFFFF"/><rect x="2" y="5" width="2" height="1" fill="#FFFF00"/><rect x="4" y="5" width="1" height="1" fill="#A0A0A0"/><rect x="5" y="5" width="1" height="1" fill="#FFFF00"/><rect x="6" y="5" width="8" height="1" fill="#000000"/><rect x="0" y="6" width="1" height="1" fill="#000000"/><rect x="1" y="6" width="1" height="1" fill="#A0A0A0"/><rect x="2" y="6" width="4" height="1" fill="#000000"/><rect x="6" y="6" width="4" height="1" fill="#FFFFFF"/><rect x="10" y="6" width="1" height="1" fill="#000000"/><rect x="11" y="6" width="4" height="1" fill="#FFFFFF"/><rect x="15" y="6" width="1" height="1" fill="#000000"/><rect x="0" y="7" width="6" height="1" fill="#000000"/><rect x="6" y="7" width="2" height="1" fill="#FFFFFF"/><rect x="8" y="7" width="1" height="1" fill="#E01010"/><rect x="9" y="7" width="1" height="1" fill="#FFFFFF"/><rect x="10" y="7" width="1" height="1" fill="#000000"/><rect x="11" y="7" width="5" height="1" fill="#FFFFFF"/><rect x="16" y="7" width="1" height="1" fill="#000000"/><rect x="0" y="8" width="1" height="1" fill="#000000"/><rect x="1" y="8" width="1" height="1" fill="#A0A0A0"/><rect x="2" y="8" width="5" height="1" fill="#000000"/><rect x="7" y="8" width="1" height="1" fill="#FFFFFF"/><rect x="8" y="8" width="1" height="1" fill="#E01010"/><rect x="9" y="8" width="3" height="1" fill="#FFFFFF"/><rect x="12" y="8" width="1" height="1" fill="#000000"/><rect x="13" y="8" width="3" height="1" fill="#FFFFFF"/><rect x="16" y="8" width="1" height="1" fill="#000000"/><rect x="0" y="9" width="6" height="1" fill="#000000"/><rect x="6" y="9" width="10" height="1" fill="#FFFFFF"/><rect x="16" y="9" width="1" height="1" fill="#000000"/><rect x="0" y="10" width="1" height="1" fill="#000000"/><rect x="1" y="10" width="1" height="1" fill="#A0A0A0"/><rect x="2" y="10" width="4" height="1" fill="#000000"/><rect x="6" y="10" width="10" height="1" fill="#FFFFFF"/><rect x="16" y="10" width="1" height="1" fill="#000000"/><rect x="0" y="11" width="7" height="1" fill="#000000"/><rect x="7" y="11" width="3" height="1" fill="#FFFFFF"/><rect x="10" y="11" width="2" height="1" fill="#000000"/><rect x="12" y="11" width="3" height="1" fill="#FFFFFF"/><rect x="15" y="11" width="1" height="1" fill="#000000"/><rect x="1" y="12" width="6" height="1" fill="#000000"/><rect x="7" y="12" width="2" height="1" fill="#FFFFFF"/><rect x="9" y="12" width="1" height="1" fill="#000000"/><rect x="12" y="12" width="1" height="1" fill="#000000"/><rect x="13" y="12" width="2" height="1" fill="#FFFFFF"/><rect x="15" y="12" width="1" height="1" fill="#000000"/><rect x="6" y="13" width="1" height="1" fill="#000000"/><rect x="7" y="13" width="2" height="1" fill="#FFFFFF"/><rect x="9" y="13" width="1" height="1" fill="#000000"/><rect x="12" y="13" width="1" height="1" fill="#000000"/><rect x="13" y="13" width="2" height="1" fill="#FFFFFF"/><rect x="15" y="13" width="1" height="1" fill="#000000"/><rect x="7" y="14" width="2" height="1" fill="#000000"/><rect x="13" y="14" width="2" height="1" fill="#000000"/></svg>
<svg style="position:absolute;left:322px;top:7px" width="17" height="16" viewBox="0 0 17 16" shape-rendering="crispEdges"><rect x="2" y="0" width="2" height="1" fill="#000000"/><rect x="4" y="0" width="1" height="1" fill="#A0A0A0"/><rect x="5" y="0" width="1" height="1" fill="#000000"/><rect x="1" y="1" width="1" height="1" fill="#000000"/><rect x="2" y="1" width="2" height="1" fill="#FFFFFF"/><rect x="4" y="1" width="1" height="1" fill="#A0A0A0"/><rect x="5" y="1" width="1" height="1" fill="#FFFFFF"/><rect x="6" y="1" width="1" height="1" fill="#000000"/><rect x="0" y="2" width="1" height="1" fill="#000000"/><rect x="1" y="2" width="1" height="1" fill="#FFFFFF"/><rect x="2" y="2" width="1" height="1" fill="#FFFF00"/><rect x="3" y="2" width="1" height="1" fill="#A0A0A0"/><rect x="4" y="2" width="1" height="1" fill="#FFFF00"/><rect x="5" y="2" width="1" height="1" fill="#A0A0A0"/><rect x="6" y="2" width="1" height="1" fill="#000000"/><rect x="0" y="3" width="1" height="1" fill="#000000"/><rect x="1" y="3" width="1" height="1" fill="#FFFFFF"/><rect x="2" y="3" width="1" height="1" fill="#FFFF00"/><rect x="3" y="3" width="1" height="1" fill="#A0A0A0"/><rect x="4" y="3" width="1" height="1" fill="#FFFF00"/><rect x="5" y="3" width="1" height="1" fill="#A0A0A0"/><rect x="6" y="3" width="1" height="1" fill="#000000"/><rect x="11" y="3" width="1" height="1" fill="#000000"/><rect x="0" y="4" width="1" height="1" fill="#000000"/><rect x="1" y="4" width="1" height="1" fill="#FFFFFF"/><rect x="2" y="4" width="1" height="1" fill="#FFFF00"/><rect x="3" y="4" width="1" height="1" fill="#A0A0A0"/><rect x="4" y="4" width="1" height="1" fill="#FFFF00"/><rect x="5" y="4" width="1" height="1" fill="#A0A0A0"/><rect x="6" y="4" width="1" height="1" fill="#000000"/><rect x="11" y="4" width="1" height="1" fill="#000000"/><rect x="0" y="5" width="7" height="1" fill="#000000"/><rect x="8" y="5" width="1" height="1" fill="#000000"/><rect x="11" y="5" width="1" height="1" fill="#000000"/><rect x="0" y="6" width="1" height="1" fill="#000000"/><rect x="1" y="6" width="1" height="1" fill="#A0A0A0"/><rect x="2" y="6" width="5" height="1" fill="#000000"/><rect x="8" y="6" width="2" height="1" fill="#000000"/><rect x="11" y="6" width="1" height="1" fill="#000000"/><rect x="0" y="7" width="7" height="1" fill="#000000"/><rect x="8" y="7" width="1" height="1" fill="#000000"/><rect x="9" y="7" width="1" height="1" fill="#FFFFFF"/><rect x="10" y="7" width="2" height="1" fill="#000000"/><rect x="0" y="8" width="1" height="1" fill="#000000"/><rect x="1" y="8" width="1" height="1" fill="#A0A0A0"/><rect x="2" y="8" width="5" height="1" fill="#000000"/><rect x="8" y="8" width="1" height="1" fill="#000000"/><rect x="9" y="8" width="2" height="1" fill="#FFFFFF"/><rect x="11" y="8" width="1" height="1" fill="#000000"/><rect x="0" y="9" width="4" height="1" fill="#000000"/><rect x="4" y="9" width="4" height="1" fill="#FFFFFF"/><rect x="8" y="9" width="1" height="1" fill="#000000"/><rect x="9" y="9" width="3" height="1" fill="#FFFFFF"/><rect x="12" y="9" width="4" height="1" fill="#000000"/><rect x="0" y="10" width="1" height="1" fill="#000000"/><rect x="1" y="10" width="1" height="1" fill="#A0A0A0"/><rect x="2" y="10" width="5" height="1" fill="#000000"/><rect x="8" y="10" width="1" height="1" fill="#000000"/><rect x="9" y="10" width="2" height="1" fill="#FFFFFF"/><rect x="11" y="10" width="1" height="1" fill="#000000"/><rect x="0" y="11" width="7" height="1" fill="#000000"/><rect x="8" y="11" width="1" height="1" fill="#000000"/><rect x="9" y="11" width="1" height="1" fill="#FFFFFF"/><rect x="10" y="11" width="1" height="1" fill="#000000"/><rect x="1" y="12" width="5" height="1" fill="#000000"/><rect x="8" y="12" width="2" height="1" fill="#000000"/><rect x="8" y="13" width="1" height="1" fill="#000000"/></svg>
<div style="left:0;top:0;width:715px;height:478px;filter:url(#th)">
<div class="t" style="left:228.19px;top:43px;color:#000;font-size:12px;font-weight:normal;letter-spacing:0.5px;transform:scaleX(0.8142);">Power Consumption</div>
<div class="t" style="left:269.17px;top:68px;color:#000;font-size:12px;font-weight:normal;letter-spacing:0.5px;transform:scaleX(0.8286);">Block Name:</div>
<div class="t" style="left:351.00px;top:66px;color:#000;font-size:12px;font-weight:normal;letter-spacing:0.5px;transform:scaleX(0.8571);">WGT</div>
<div class="t" style="left:267.19px;top:95px;color:#000;font-size:12px;font-weight:normal;letter-spacing:0.5px;transform:scaleX(0.8108);">Static Power:</div>
<div class="t" style="left:351.00px;top:94px;color:#000;font-size:12px;font-weight:normal;letter-spacing:0.5px;transform:scaleX(0.8438);">0 mW</div>
<div class="t" style="left:254.19px;top:120px;color:#000;font-size:12px;font-weight:normal;letter-spacing:0.5px;transform:scaleX(0.8132);">Dynamic Power:</div>
<div class="t" style="left:352.00px;top:118px;color:#000;font-size:12px;font-weight:normal;letter-spacing:0.5px;transform:scaleX(0.8246);">0.014 mW</div>
<div class="t" style="left:221.15px;top:162px;color:#000;font-size:12px;font-weight:normal;letter-spacing:0.5px;transform:scaleX(0.8462);">Breakdown:</div>
<div class="t" style="left:292.14px;top:163px;color:#000;font-size:12px;font-weight:normal;letter-spacing:0.5px;transform:scaleX(0.8636);">By Type</div>
<div class="t" style="left:557.10px;top:162px;color:#000;font-size:12px;font-weight:normal;letter-spacing:0.5px;transform:scaleX(0.8966);">Show</div>
<div class="t" style="left:621.21px;top:162px;color:#000;font-size:12px;font-weight:normal;letter-spacing:0.5px;transform:scaleX(0.7931);">Chart</div>
<div class="t" style="left:671.14px;top:162px;color:#000;font-size:12px;font-weight:normal;letter-spacing:0.5px;transform:scaleX(0.8571);">Grid</div>
<div class="t" style="left:295.00px;top:200px;color:#000;font-size:12px;font-weight:bold;letter-spacing:0.5px;">Type</div>
<div class="t" style="left:417.04px;top:200px;color:#000;font-size:12px;font-weight:bold;letter-spacing:0.5px;transform:scaleX(0.9577);">Power (mW)</div>
<div class="t" style="left:567.04px;top:200px;color:#000;font-size:12px;font-weight:bold;letter-spacing:0.5px;transform:scaleX(0.9552);">Percentage</div>
<div class="t" style="left:224.00px;top:223px;color:#000;font-size:12px;font-weight:normal;letter-spacing:0.5px;">1</div>
<div class="t" style="left:240.06px;top:223px;color:#000;font-size:12px;font-weight:normal;letter-spacing:0.5px;transform:scaleX(0.9412);">Net</div>
<div class="t" style="left:224.00px;top:238px;color:#000;font-size:12px;font-weight:normal;letter-spacing:0.5px;">2</div>
<div class="t" style="left:240.12px;top:238px;color:#000;font-size:12px;font-weight:normal;letter-spacing:0.5px;transform:scaleX(0.8800);">Gate</div>
<div class="t" style="left:439.00px;top:223px;color:#000;font-size:12px;font-weight:normal;letter-spacing:0.5px;transform:scaleX(0.8667);">0.003</div>
<div class="t" style="left:439.00px;top:238px;color:#000;font-size:12px;font-weight:normal;letter-spacing:0.5px;transform:scaleX(0.8333);">0.011</div>
<div class="t" style="left:585.18px;top:223px;color:#000;font-size:12px;font-weight:normal;letter-spacing:0.5px;transform:scaleX(0.8235);">20.3%</div>
<div class="t" style="left:585.18px;top:238px;color:#000;font-size:12px;font-weight:normal;letter-spacing:0.5px;transform:scaleX(0.8235);">79.7%</div>
<div class="t" style="left:56.00px;top:34px;color:#000;font-size:12px;font-weight:normal;letter-spacing:0.5px;transform:scaleX(0.8333);">fpga</div>
<div class="t" style="left:74.54px;top:70px;color:#000;font-size:12px;font-weight:normal;letter-spacing:0.5px;transform:scaleX(0.9643);">PC</div>
<div class="t" style="left:75.00px;top:88px;color:#000;font-size:12px;font-weight:normal;letter-spacing:0.5px;transform:scaleX(0.9333);">VC</div>
<div class="t" style="left:95.00px;top:106px;color:#000;font-size:12px;font-weight:normal;letter-spacing:0.5px;transform:scaleX(0.9000);">VC/U159</div>
<div class="t" style="left:75.12px;top:124px;color:#000;font-size:12px;font-weight:normal;letter-spacing:0.5px;transform:scaleX(0.8788);">LMDC</div>
<div class="t" style="left:95.12px;top:142px;color:#000;font-size:12px;font-weight:normal;letter-spacing:0.5px;transform:scaleX(0.8765);">LMDC/U104</div>
<div class="t" style="left:95.15px;top:160px;color:#000;font-size:12px;font-weight:normal;letter-spacing:0.5px;transform:scaleX(0.8532);">LMDC/sub_21</div>
<div class="t" style="left:75.05px;top:178px;color:#000;font-size:12px;font-weight:normal;letter-spacing:0.5px;transform:scaleX(0.9500);">IG</div>
<div class="t" style="left:75.08px;top:196px;color:#000;font-size:12px;font-weight:normal;letter-spacing:0.5px;transform:scaleX(0.9231);">PL</div>
<div class="t" style="left:75.13px;top:214px;color:#000;font-size:12px;font-weight:normal;letter-spacing:0.5px;transform:scaleX(0.8710);">CTRL</div>
<div class="t" style="left:75.11px;top:232px;color:#000;font-size:12px;font-weight:normal;letter-spacing:0.5px;transform:scaleX(0.8889);">IBC</div>
<div class="t" style="left:75.15px;top:250px;color:#000;font-size:12px;font-weight:normal;letter-spacing:0.5px;transform:scaleX(0.8545);">SREG</div>
<div class="t" style="left:75.13px;top:268px;color:#000;font-size:12px;font-weight:normal;letter-spacing:0.5px;transform:scaleX(0.8682);">CLK</div>
<div class="t" style="left:75.15px;top:286px;color:#000;font-size:12px;font-weight:normal;letter-spacing:0.5px;transform:scaleX(0.8545);">CREG</div>
<div class="t" style="left:42.07px;top:10px;color:#2152C8;font-size:11px;font-weight:normal;letter-spacing:-0.5px;transform:scaleX(0.9286);">Summary</div>
<div class="t" style="left:121.08px;top:10px;color:#2152C8;font-size:11px;font-weight:normal;letter-spacing:-0.5px;transform:scaleX(0.9211);">Domains</div>
<div class="t" style="left:193.00px;top:8px;color:#000;font-size:11px;font-weight:bold;letter-spacing:0px;transform:scaleX(0.9773);">Analysis</div>
<div class="t" style="left:271.00px;top:10px;color:#2152C8;font-size:11px;font-weight:normal;letter-spacing:-0.3px;transform:scaleX(0.9062);">Activity</div>
<div class="t" style="left:340.09px;top:10px;color:#2152C8;font-size:11px;font-weight:normal;letter-spacing:-0.5px;transform:scaleX(0.9138);">Enable Rates</div>
</div>
<div style="left:0;top:0;width:715px;height:478px;filter:url(#th2)">
<div class="t" style="left:75.00px;top:52px;color:#fff;font-size:12px;font-weight:normal;letter-spacing:0.5px;transform:scaleX(0.8929);">WGT</div>
</div>
</body></html>
